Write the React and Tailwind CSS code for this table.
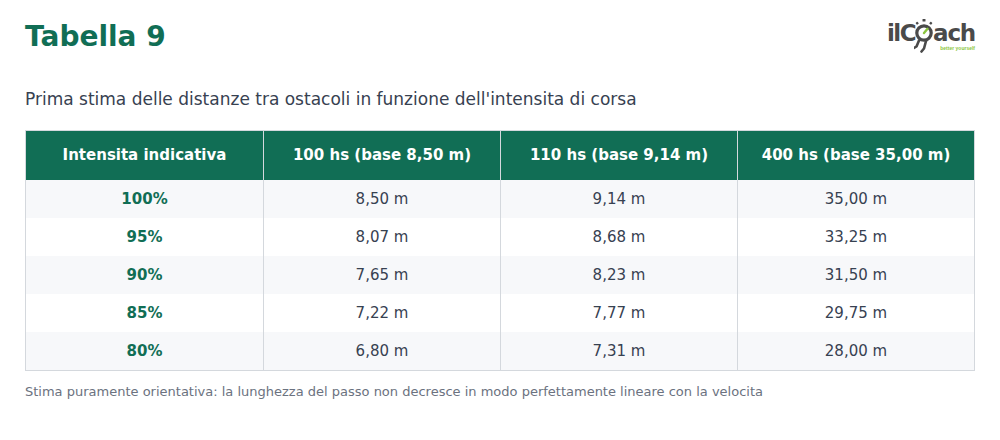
import React from "react";

const rows = [
  ["100%", "8,50 m", "9,14 m", "35,00 m"],
  ["95%", "8,07 m", "8,68 m", "33,25 m"],
  ["90%", "7,65 m", "8,23 m", "31,50 m"],
  ["85%", "7,22 m", "7,77 m", "29,75 m"],
  ["80%", "6,80 m", "7,31 m", "28,00 m"],
];

const heads = [
  "Intensita indicativa",
  "100 hs (base 8,50 m)",
  "110 hs (base 9,14 m)",
  "400 hs (base 35,00 m)",
];

function Stopwatch() {
  return (
    <svg width="20" height="34" viewBox="0 0 20 34" className="mx-[-1px]">
      <g fill="#4a4a4a">
        <rect x="8.5" y="0" width="3" height="2.4" rx="0.5" />
        <rect x="2" y="3" width="2.4" height="2.4" rx="0.5" transform="rotate(-40 3.2 4.2)" />
        <rect x="15.6" y="3" width="2.4" height="2.4" rx="0.5" transform="rotate(40 16.8 4.2)" />
      </g>
      <circle cx="10" cy="14" r="7.2" fill="none" stroke="#4a4a4a" strokeWidth="3.2" />
      <path d="M10 14 L13.5 9.8" stroke="#8cc63f" strokeWidth="2.4" strokeLinecap="round" />
      <path d="M5 21.5 L2.5 27.5 L0 29" stroke="#4a4a4a" strokeWidth="2.6" fill="none" strokeLinecap="round" strokeLinejoin="round" />
      <path d="M12 22 L10 29.5 L7.5 32.5" stroke="#4a4a4a" strokeWidth="2.6" fill="none" strokeLinecap="round" strokeLinejoin="round" />
    </svg>
  );
}

function Logo() {
  return (
    <div className="flex items-start h-[36px]">
      <span className="text-[23px] font-black text-[#4a4a4a] tracking-[-1.5px] mt-[3px] leading-none" style={{ fontFamily: '"DejaVu Sans", sans-serif' }}>
        ilC
      </span>
      <Stopwatch />
      <div className="flex flex-col items-end">
        <span className="text-[23px] font-black text-[#4a4a4a] tracking-[-1.2px] mt-[3px] leading-none" style={{ fontFamily: '"DejaVu Sans", sans-serif' }}>
          ach
        </span>
        <span className="text-[5px] font-bold text-[#8cc63f] mt-[1px] leading-none" style={{ fontFamily: '"Liberation Sans", sans-serif' }}>
          better yourself
        </span>
      </div>
    </div>
  );
}

export default function App() {
  return (
    <div className="w-[1000px] h-[440px] bg-white px-[25px] pt-[18px]" style={{ fontFamily: '"DejaVu Sans", sans-serif' }}>
      <div className="flex justify-between items-start">
        <h1 className="text-[28px] font-bold text-[#116e55] leading-[38px]">Tabella 9</h1>
        <div className="mt-[1px]">
          <Logo />
        </div>
      </div>
      <p className="mt-[31px] text-[17px] text-[#374151] leading-[24px]">
        Prima stima delle distanze tra ostacoli in funzione dell'intensita di corsa
      </p>
      <div className="mt-[19px] border border-[#d4d8dd]">
        <div className="grid grid-cols-4 bg-[#116e55] h-[49px]">
          {heads.map((h, i) => (
            <div
              key={i}
              className={`flex items-center justify-center text-white font-bold text-[15px] ${i > 0 ? "border-l border-[#d4d8dd]" : ""}`}
            >
              {h}
            </div>
          ))}
        </div>
        {rows.map((r, ri) => (
          <div key={ri} className={`grid grid-cols-4 h-[38px] ${ri % 2 === 0 ? "bg-[#f7f8fa]" : "bg-white"}`}>
            {r.map((c, ci) => (
              <div
                key={ci}
                className={`flex items-center justify-center text-[15px] ${ci === 0 ? "font-bold text-[#116e55]" : "text-[#374151] border-l border-[#d4d8dd]"}`}
              >
                {c}
              </div>
            ))}
          </div>
        ))}
      </div>
      <p className="mt-[12px] text-[13px] text-[#6b7280] leading-[18px]">
        Stima puramente orientativa: la lunghezza del passo non decresce in modo perfettamente lineare con la velocita
      </p>
    </div>
  );
}
